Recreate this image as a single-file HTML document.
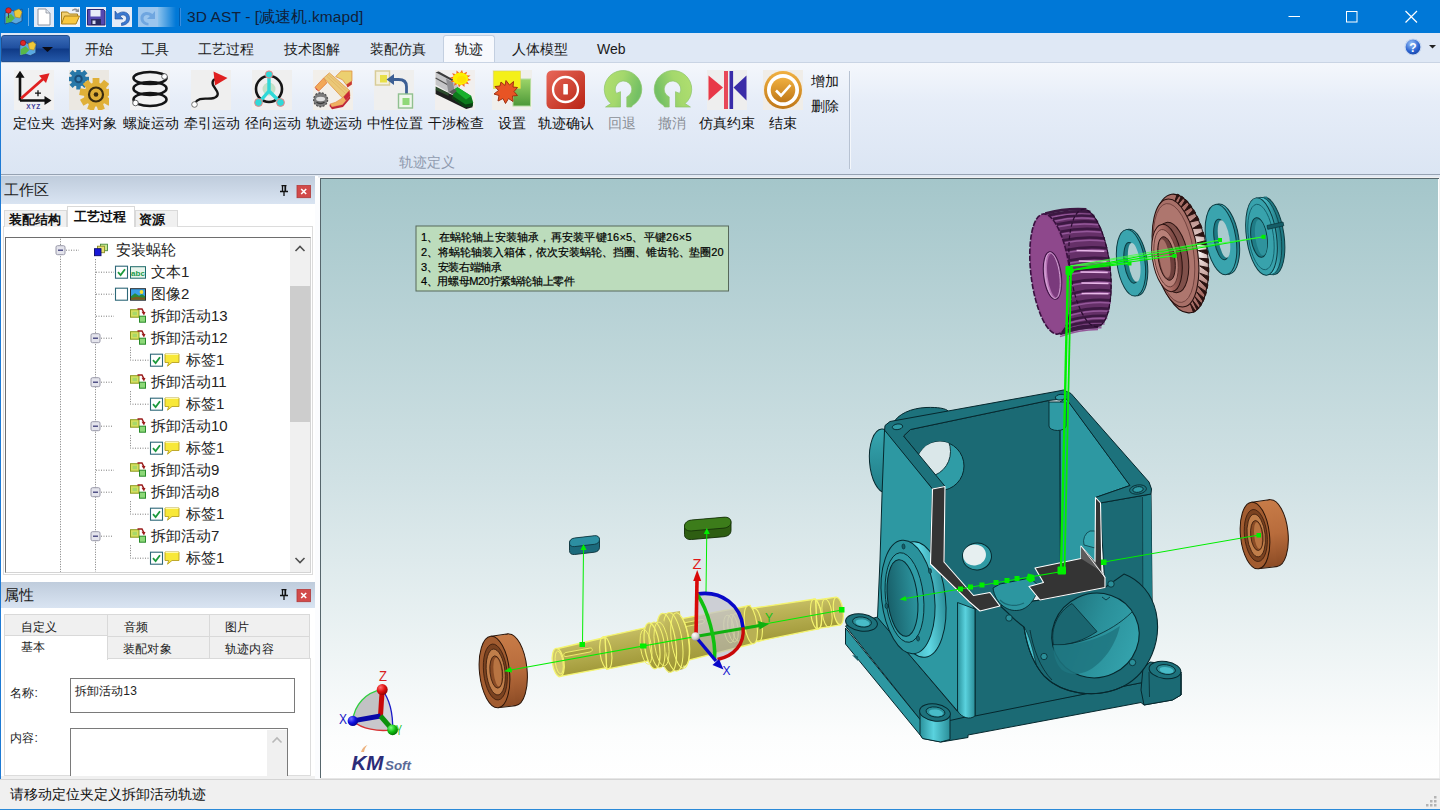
<!DOCTYPE html>
<html lang="zh">
<head>
<meta charset="utf-8">
<title>3D AST</title>
<style>
*{box-sizing:border-box;margin:0;padding:0}
html,body{width:1440px;height:810px;overflow:hidden;background:#f0f0f0}
body{position:relative;font-family:"Liberation Sans",sans-serif;font-size:14px;color:#111;-webkit-font-smoothing:antialiased}
.abs{position:absolute}
/* title bar */
#title{left:0;top:0;width:1440px;height:33px;background:#0078d7}
#title .ttl{left:187px;top:7px;font-size:15.5px;color:#10203a;white-space:nowrap;letter-spacing:0.1px}
/* menu bar */
#menu{left:0;top:33px;width:1440px;height:30px;background:#dfe8f5}
#menu .tab{position:absolute;top:8px;font-size:14px;color:#1a1a1a;white-space:nowrap}
#appbtn{left:1px;top:35px;width:69px;height:27px;border-radius:3px 3px 0 0;background:linear-gradient(#3b6cb8 0%,#1f4f9f 48%,#0f3a86 52%,#2458a8 100%);border:1px solid #24508f}
#acttab{left:443px;top:35px;width:52px;height:29px;background:#f7f9fd;border:1px solid #c3cfe0;border-bottom:none;border-radius:3px 3px 0 0}
/* ribbon */
#ribbon{left:0;top:62px;width:1440px;height:112px;background:linear-gradient(#f4f7fc 0%,#e6edf8 35%,#dbe5f3 100%);border-top:1px solid #c9d4e4}
.rb{position:absolute;top:52px;font-size:14px;color:#111;white-space:nowrap;transform:translateX(-50%)}
.rb.dis{color:#8a8f96}
.ico{position:absolute;top:7px;width:40px;height:40px}
/* left panel */
#left{left:0;top:176px;width:318px;height:603px;background:#fff}
.phead{position:absolute;left:1px;width:313.700px;height:26px;background:linear-gradient(#bfccdc,#d9e4f2);font-size:14.5px;color:#1a1a1a}
.phead span{position:absolute;left:3px;top:5px}
.row{position:absolute;left:0;height:22px;font-size:15px;color:#222;white-space:nowrap;line-height:22px}
/* status */
#status{left:0;top:779px;width:1440px;height:31px;background:#f0f0f0;border-top:1px solid #d4d4d4;font-size:14px;color:#111}
</style>
</head>
<body>
<div id="title" class="abs">
<svg class="abs" style="left:0;top:0" width="190" height="33" viewBox="0 0 190 33">
<defs><linearGradient id="fade" x1="0" x2="1"><stop offset="0" stop-color="#fff" stop-opacity=".55"/><stop offset="1" stop-color="#fff" stop-opacity="0"/></linearGradient></defs>
<!-- app icon -->
<g id="appico"><path d="M5 13 L11 10 L16 12 L22 9 L22 21 L16 24 L11 22 L5 24Z" fill="#5aa8e0" stroke="#1c4a80" stroke-width=".8"/>
<path d="M6 17l5-3 4 4-4 4-5 1z" fill="#58b848"/><path d="M14 11l5-2 3 3-2 6-5-1z" fill="#f0c838" stroke="#a07818" stroke-width=".5"/>
<circle cx="8.5" cy="10.5" r="2.8" fill="#e02828" stroke="#801010" stroke-width=".6"/><path d="M8.5 13v5" stroke="#444" stroke-width="1"/></g>
<path d="M28.5 8v18" stroke="#6aaee8" stroke-width="1"/>
<!-- new -->
<rect x="34" y="7" width="20" height="20" fill="#dfeaf8"/><path d="M38 9h8l4 4v12H38z" fill="#fff" stroke="#8a93a0" stroke-width="1"/><path d="M46 9v4h4" fill="#e4e8ee" stroke="#8a93a0" stroke-width=".8"/>
<!-- open -->
<rect x="60" y="7" width="20" height="20" fill="#eef3fa"/><path d="M61.500 24V12h6l2 2h8v3" fill="#f2d070" stroke="#a8801c" stroke-width="1"/><path d="M61.500 24l3-8h15l-3.500 8z" fill="#f8c840" stroke="#a8801c" stroke-width="1"/><path d="M72 10c2-2 5-2 6 0l1-2v4h-4l1.500-1c-1-1-2.500-1-4.500 0z" fill="#8a8f98"/>
<!-- save -->
<rect x="86" y="7" width="20" height="20" fill="#e6ecf6"/><path d="M87.500 9.500h16l1.500 1.500v14h-17.500z" fill="#5448b0" stroke="#2a2470" stroke-width="1"/><rect x="90.500" y="10" width="10" height="6.500" fill="#e8ecf8"/><rect x="91" y="19" width="10" height="6" fill="#2a2a60"/><rect x="92.500" y="20.500" width="3" height="3.500" fill="#d8dcf0"/>
<!-- undo -->
<rect x="112" y="7" width="20" height="20" fill="#e4ecf8"/><path d="M115 11v8h8l-3-3c3-2 6.500-1 6.500 2.500 0 2.500-2 4-5 4.500v2.500c5-.5 8.500-3.500 8-8-.5-5.500-7-7.500-12-3.500z" fill="#3a78d0" stroke="#1c4c98" stroke-width=".6"/>
<!-- redo (disabled) -->
<rect x="138" y="7" width="20" height="20" fill="#9cc6ee"/><path d="M155 11v8h-8l3-3c-3-2-6.500-1-6.500 2.500 0 2.500 2 4 5 4.500v2.500c-5-.5-8.500-3.500-8-8 .5-5.500 7-7.500 12-3.500z" fill="#6fa6e0"/>
<rect x="158" y="7" width="18" height="20" fill="url(#fade)"/>
<path d="M180.500 8v18" stroke="#3a8ee0" stroke-width="1"/><path d="M179.500 8v18" stroke="#005cb0" stroke-width="1"/>
</svg>
<div class="abs ttl">3D AST - [减速机.kmapd]</div>
<svg class="abs" style="left:1280px;top:0" width="160" height="33" viewBox="0 0 160 33"><g stroke="#fff" stroke-width="1" fill="none">
<path d="M8.500 16.500h11.500"/><rect x="66.500" y="11.500" width="10.500" height="10.500"/><path d="M125.500 11l11.500 11.500M137 11l-11.500 11.500" stroke-width="1.200"/></g></svg>
</div>

<div id="menu" class="abs">
<span class="tab" style="left:85px">开始</span><span class="tab" style="left:141px">工具</span><span class="tab" style="left:198px">工艺过程</span><span class="tab" style="left:284px">技术图解</span><span class="tab" style="left:370px">装配仿真</span><span class="tab" style="left:512px">人体模型</span><span class="tab" style="left:597px">Web</span>
</div>
<div id="appbtn" class="abs"><svg class="abs" style="left:16px;top:3px" width="40" height="20" viewBox="0 0 40 20">
<g transform="translate(-3,-6) scale(.95)"><path d="M5 13 L11 10 L16 12 L22 9 L22 21 L16 24 L11 22 L5 24Z" fill="#5aa8e0" stroke="#1c3a70" stroke-width=".8"/><path d="M6 17l5-3 4 4-4 4-5 1z" fill="#58b848"/><path d="M14 11l5-2 3 3-2 6-5-1z" fill="#f0c838" stroke="#a07818" stroke-width=".5"/><circle cx="8.500" cy="10.500" r="2.800" fill="#e02828" stroke="#801010" stroke-width=".6"/></g>
<path d="M24 8h11l-5.500 5z" fill="#0a0a14"/></svg></div>
<div id="acttab" class="abs"><span class="abs" style="left:11px;top:5px;font-size:14px;color:#1a1a1a;white-space:nowrap">轨迹</span></div>
<svg class="abs" style="left:1400px;top:36px" width="40" height="22" viewBox="0 0 40 22"><defs><radialGradient id="hg" cx=".4" cy=".3" r=".8"><stop offset="0" stop-color="#9cc4f8"/><stop offset=".6" stop-color="#2a62d0"/><stop offset="1" stop-color="#123c98"/></radialGradient></defs>
<circle cx="13" cy="11" r="8" fill="url(#hg)" stroke="#c8d8f0" stroke-width="1.200"/><text x="13" y="15.500" font-family="Liberation Sans" font-weight="bold" font-size="12" fill="#fff" text-anchor="middle">?</text><path d="M29 9h7l-3.500 3.500z" fill="#222"/></svg>

<div id="ribbon" class="abs">
<svg width="0" height="0" style="position:absolute"><defs><linearGradient id="gRed" x1="0" y1="0" x2="1" y2="1"><stop offset="0" stop-color="#e8685a"/><stop offset="1" stop-color="#b82414"/></linearGradient><linearGradient id="gGrn" x1="0" y1="0" x2="0" y2="1"><stop offset="0" stop-color="#a8dc70"/><stop offset="1" stop-color="#74b85c"/></linearGradient><linearGradient id="gGrn2" x1="0" y1="0" x2="0" y2="1"><stop offset="0" stop-color="#9cd468"/><stop offset="1" stop-color="#4c9838"/></linearGradient><linearGradient id="gGold" x1="0" y1="0" x2="0" y2="1"><stop offset="0" stop-color="#f0b040"/><stop offset="1" stop-color="#c07818"/></linearGradient><linearGradient id="gOm" x1="0" y1="0" x2="1" y2="0.3"><stop offset="0" stop-color="#b2e070"/><stop offset=".5" stop-color="#a4d86c"/><stop offset="1" stop-color="#74c064"/></linearGradient></defs></svg>
<svg class="ico" style="left:14px" viewBox="0 0 40 40"><rect width="40" height="40" fill="#f1f1f1"/><path d="M6 30.500V4M6 30.500H33" stroke="#111" stroke-width="2.600" fill="none"/><path d="M6 .8l4.600 7H1.400zM37.500 30.500l-7 4.600v-9.200z" fill="#111"/>
<path d="M7 28.500L29 9" stroke="#e02020" stroke-width="2.800"/><path d="M35.500 3.200l-3.500 9.800-7-7.600z" fill="#e02020"/>
<path d="M21 23.200h6M24 20.200v6" stroke="#111" stroke-width="1.300"/>
<text x="19.500" y="39" font-family="Liberation Sans" font-weight="bold" font-size="6.500" fill="#3a3a98" text-anchor="middle" letter-spacing=".6">XYZ</text></svg>
<span class="rb" style="left:34px">定位夹</span>
<svg class="ico" style="left:69px" viewBox="0 0 40 40"><rect width="40" height="40" fill="#ebe8e2"/><g transform="translate(9.500,9)"><rect x="-2.200" y="-10.500" width="4.400" height="5" fill="#2878a8" transform="rotate(0)"/><rect x="-2.200" y="-10.500" width="4.400" height="5" fill="#2878a8" transform="rotate(45)"/><rect x="-2.200" y="-10.500" width="4.400" height="5" fill="#2878a8" transform="rotate(90)"/><rect x="-2.200" y="-10.500" width="4.400" height="5" fill="#2878a8" transform="rotate(135)"/><rect x="-2.200" y="-10.500" width="4.400" height="5" fill="#2878a8" transform="rotate(180)"/><rect x="-2.200" y="-10.500" width="4.400" height="5" fill="#2878a8" transform="rotate(225)"/><rect x="-2.200" y="-10.500" width="4.400" height="5" fill="#2878a8" transform="rotate(270)"/><rect x="-2.200" y="-10.500" width="4.400" height="5" fill="#2878a8" transform="rotate(315)"/><circle r="7.500" fill="#2878a8"/><circle r="4.200" fill="#1c4e78"/><circle r="2.200" fill="#3a8cc0"/></g>
<g transform="translate(27,24.500)"><rect x="-3.400" y="-16.500" width="6.800" height="6" fill="#e0b038" transform="rotate(0)"/><rect x="-3.400" y="-16.500" width="6.800" height="6" fill="#e0b038" transform="rotate(40)"/><rect x="-3.400" y="-16.500" width="6.800" height="6" fill="#e0b038" transform="rotate(80)"/><rect x="-3.400" y="-16.500" width="6.800" height="6" fill="#e0b038" transform="rotate(120)"/><rect x="-3.400" y="-16.500" width="6.800" height="6" fill="#e0b038" transform="rotate(160)"/><rect x="-3.400" y="-16.500" width="6.800" height="6" fill="#e0b038" transform="rotate(200)"/><rect x="-3.400" y="-16.500" width="6.800" height="6" fill="#e0b038" transform="rotate(240)"/><rect x="-3.400" y="-16.500" width="6.800" height="6" fill="#e0b038" transform="rotate(280)"/><rect x="-3.400" y="-16.500" width="6.800" height="6" fill="#e0b038" transform="rotate(320)"/><circle r="12" fill="#e0b038"/><circle r="7" fill="none" stroke="#3a2c10" stroke-width="2.200"/><circle r="2.300" fill="#3a2c10"/></g></svg>
<span class="rb" style="left:89px">选择对象</span>
<svg class="ico" style="left:130px" viewBox="0 0 40 40"><rect width="40" height="40" fill="#f2f2f2"/><g fill="none" stroke="#151515" stroke-width="2.600"><ellipse cx="20" cy="8" rx="16.500" ry="6"/><ellipse cx="20" cy="18.500" rx="16.500" ry="6.500"/><ellipse cx="20" cy="29.500" rx="16.500" ry="6.500"/></g>
<circle cx="34.500" cy="6.500" r="2.800" fill="#fff" stroke="#555" stroke-width=".9"/><circle cx="5.500" cy="33" r="2.800" fill="#fff" stroke="#555" stroke-width=".9"/></svg>
<span class="rb" style="left:150.5px">螺旋运动</span>
<svg class="ico" style="left:191px" viewBox="0 0 40 40"><rect width="40" height="40" fill="#efefef"/><path d="M4 33c4-7 12-3 19-5 8-3 1-9-1-13-1-3 0-5 2-6" fill="none" stroke="#151515" stroke-width="2.400"/><path d="M22.500 1.500l14 6.500-12.500 7.500z" fill="#e02020"/><circle cx="3.500" cy="34.500" r="2.800" fill="#fff" stroke="#666" stroke-width=".9"/></svg>
<span class="rb" style="left:211.5px">牵引运动</span>
<svg class="ico" style="left:252px" viewBox="0 0 40 40"><rect width="40" height="40" fill="#efefef"/><circle cx="17" cy="19" r="6.500" fill="#c4e0c8"/><circle cx="17" cy="19" r="13" fill="none" stroke="#151515" stroke-width="2.600"/>
<path d="M17 4v17M17 21L7 32.500M17 21l11.500 11.500" stroke="#30d8d8" stroke-width="3.400" fill="none" stroke-linecap="round"/>
<g fill="#30d8d8" stroke="#f08080" stroke-width="1"><circle cx="17" cy="4.500" r="3.600"/><circle cx="6.500" cy="32.500" r="3.900"/><circle cx="28.500" cy="32.500" r="3.900"/></g></svg>
<span class="rb" style="left:272.5px">径向运动</span>
<svg class="ico" style="left:313px" viewBox="0 0 40 40"><rect width="40" height="40" fill="#f2efea"/>
<path d="M22.600 6.600L28.250 1H38.900V11L33.250 14.750 29.500 9.750Z" fill="#ecd070" stroke="#e09040" stroke-width=".8"/>
<path d="M33.250 14.750L38.900 11V14.500L34.500 17.500Z" fill="#c83a30"/>
<path d="M2 17.250L10.750 7.900 13.900 12.900 5.750 21Z" fill="#f2a858" stroke="#e07838" stroke-width=".8"/>
<path d="M2 17.250L5.750 21 7.500 22.500 3 19.500Z" fill="#d03030"/>
<path d="M10.750 7.900L16.400 2.900 36.400 20.400 29.500 27.900Z" fill="#ebc878" stroke="#e09848" stroke-width=".8"/>
<path d="M13.500 6L32.500 23.500M15.200 4.500L34.500 21.800" stroke="#e0b060" stroke-width=".7" fill="none"/>
<path d="M17 34.100L22.600 32.250 29.500 27.900 36.400 20.400 37 26 29.500 34.750 18.900 37Z" fill="#f0b060" stroke="#e08840" stroke-width=".6"/>
<path d="M17 34.100L18.900 37 29.500 34.750 37 26 37.200 28.500 30 37 19 39.300 16.500 36Z" fill="#c02838"/>
<path d="M30.500 27L36.400 20.400 37 26 33 30.500Z" fill="#c82838"/>
<circle cx="7.600" cy="29.750" r="7" fill="#7c7c7c" stroke="#505050" stroke-width="1.300" stroke-dasharray="2 1.400"/><ellipse cx="7.600" cy="29" rx="4.500" ry="2.200" fill="#e0e0e0"/><path d="M3.500 32c2 2 6 2 8 0" stroke="#3c3c3c" stroke-width="1.400" fill="none"/>
</svg>
<span class="rb" style="left:333.5px">轨迹运动</span>
<svg class="ico" style="left:374px" viewBox="0 0 40 40"><rect width="40" height="40" fill="#efefee"/><rect x="1.500" y="1" width="14" height="14" fill="#f4f0dc" stroke="#d8cc98" stroke-width="1.400"/><rect x="6" y="5" width="7" height="7.500" fill="#e8e048"/>
<path d="M32.500 24V16.500c0-5-3-7-8-7H18" fill="none" stroke="#3c5f94" stroke-width="2.800"/><path d="M12.500 9.500l7.500-5.500v11z" fill="#3c5f94"/>
<rect x="24.500" y="24" width="14" height="14" fill="#eef6ea" stroke="#90c090" stroke-width="1.400"/><rect x="28.500" y="28" width="7" height="7" fill="#90d878"/></svg>
<span class="rb" style="left:394.5px">中性位置</span>
<svg class="ico" style="left:435px" viewBox="0 0 40 40"><rect width="40" height="40" fill="#f1efee"/>
<path d="M.6 2.250L3.750 1.600 18.750 9.750 23.750 17.250 13.750 22.250 .6 14.750Z" fill="#c6c6c8"/>
<path d="M.6 2.250L3.750 1.600 18.750 9.750 17 11Z" fill="#3c3c3c"/><path d="M.6 8l17 9.500" stroke="#505050" stroke-width="1.200"/><path d="M11 8.500l7 4 1.500 8-6 2.500z" fill="#8e8e92"/>
<path d="M.6 19.750L2.500 18.500 37.500 33.500V37.250L31.250 39 .6 24Z" fill="#1e1e1e"/>
<path d="M.6 16.500l13 6.500v3L.6 20z" fill="#2c4a2c"/>
<path d="M18.750 19.750L22.500 17.250 36.250 26 38.100 32.250 37.500 36 30 37.250 17.500 28.500Z" fill="#0e7a1c"/>
<path d="M18.750 19.750L22.500 17.250 36.250 26 31 29.500Z" fill="#18b02c"/>
<path d="M17.500 28.500L30 37.250 37.500 36 38 33 30.500 34.500 17.800 26Z" fill="#0a4012"/>
<path d="M14 22l5-3 3 2-4.500 3.500z" fill="#585858"/>
<path d="M27.0 -0.1L28.2 3.6L32.1 1.7L30.9 5.3L35.5 5.4L32.2 8.0L36.2 9.9L31.8 10.9L34.0 14.2L29.6 13.2L29.5 16.9L26.3 14.2L24.0 17.5L22.8 13.8L18.9 15.7L20.1 12.1L15.5 12.0L18.8 9.4L14.8 7.5L19.2 6.5L17.0 3.2L21.4 4.2L21.5 0.5L24.7 3.2Z" fill="#f46a20"/><ellipse cx="25.500" cy="8.700" rx="7.800" ry="6.200" fill="#fcf000"/><ellipse cx="26.500" cy="9.500" rx="4.500" ry="3.500" fill="#ffd800" opacity=".7"/>
</svg>
<span class="rb" style="left:455.5px">干涉检查</span>
<svg class="ico" style="left:492px" viewBox="0 0 40 40"><rect width="40" height="40" fill="#f0efec"/><rect x="21" y="9" width="17.500" height="27" fill="url(#gGrn2)" stroke="#b4dca0" stroke-width="1"/><rect x="1.500" y="1" width="27" height="17.500" fill="#f4f018" stroke="#d8d060" stroke-width=".6"/>
<path d="M9 12l4 3.500 1-5 3.500 4.500 4-3.500-.5 5.500 4.500.5-3.500 4 3.500 4-5 .5.500 5.500-4.500-3-3 5-2.500-5-5 2.500 1-5.500-5-1.500 4.500-3.500-3.500-4 5-.5z" fill="#e85424" stroke="#a03010" stroke-width="1"/></svg>
<span class="rb" style="left:511.5px">设置</span>
<svg class="ico" style="left:546px" viewBox="0 0 40 40"><rect x=".5" y=".5" width="38.500" height="38.500" rx="5.500" fill="url(#gRed)"/><circle cx="19.500" cy="19.500" r="12.500" fill="none" stroke="#fff" stroke-width="2.300"/><rect x="17.300" y="14" width="4.600" height="10.500" rx=".6" fill="#fff"/></svg>
<span class="rb" style="left:566px">轨迹确认</span>
<svg class="ico" style="left:603px" viewBox="0 0 40 40"><path d="M17.500 37H2.600L7.950 33.600A18.750 18.750 0 1 1 29.400 35.500L28.500 37H23.800V26.900A8.300 8.300 0 1 0 13.300 23.400L17.500 21.700Z" fill="url(#gOm)" stroke="#8cc46c" stroke-width=".7"/></svg>
<span class="rb dis" style="left:622px">回退</span>
<svg class="ico" style="left:653px" viewBox="0 0 40 40"><g transform="translate(40,0) scale(-1,1)"><path d="M17.500 37H2.600L7.950 33.600A18.750 18.750 0 1 1 29.400 35.500L28.500 37H23.800V26.900A8.300 8.300 0 1 0 13.300 23.400L17.500 21.700Z" fill="url(#gOm)" stroke="#8cc46c" stroke-width=".7"/></g></svg>
<span class="rb dis" style="left:672px">撤消</span>
<svg class="ico" style="left:707px" viewBox="0 0 40 40"><rect width="40" height="40" fill="#eeeeee"/><path d="M1.500 5.500L16 17.500 1.500 30.500z" fill="#e83848"/><rect x="17" y="1" width="4" height="38" fill="#e84858"/><rect x="22.500" y="1" width="3.600" height="38" fill="#3a2ca8"/><path d="M39.500 5.500L26.500 17.500l13 13z" fill="#3a2ca8"/></svg>
<span class="rb" style="left:727px">仿真约束</span>
<svg class="ico" style="left:763px" viewBox="0 0 40 40"><rect width="40" height="40" fill="#f0ede8"/><circle cx="20" cy="20" r="19" fill="url(#gGold)"/><circle cx="20" cy="20" r="16" fill="#fff"/><circle cx="20" cy="20" r="12.300" fill="url(#gGold)"/><path d="M13 20.500l5 5L27.500 15" fill="none" stroke="#fff" stroke-width="2.600"/></svg>
<span class="rb" style="left:783px">结束</span>
<span class="abs" style="left:811px;top:10px;font-size:14px;white-space:nowrap">增加</span><span class="abs" style="left:811px;top:35px;font-size:14px;white-space:nowrap">删除</span>
<span class="abs" style="left:399px;top:91px;font-size:13.500px;color:#8f9aae;white-space:nowrap">轨迹定义</span>
<div class="abs" style="left:849px;top:8px;width:1px;height:98px;background:#b7c2d2"></div><div class="abs" style="left:850px;top:8px;width:1px;height:98px;background:#f4f7fb"></div>
</div>
<div class="abs" style="left:0;top:174px;width:1440px;height:1.200px;background:#96a2b2"></div><div class="abs" style="left:0;top:175.200px;width:1440px;height:2.300px;background:#e2e9f3"></div>

<div id="left" class="abs">
<svg width="0" height="0" style="position:absolute"><defs><g id="pin"><path d="M2.500 .5h5M3.500 .5v5.500M6.500 .5v5.500M1 6.500h8M5 6.500V11" stroke="#111" stroke-width="1.300" fill="none"/><path d="M6.200 1v5" stroke="#111" stroke-width="1.400"/></g><g id="xbtn"><rect width="13.500" height="12.500" fill="#d24a4a" stroke="#b03838" stroke-width=".8"/><path d="M4.200 3.800l5 5M9.200 3.800l-5 5" stroke="#fff" stroke-width="1.600"/></g><g id="minus"><rect x=".5" y=".5" width="9" height="9" rx="1.500" fill="#e4e4ec" stroke="#9898a8"/><path d="M2.500 5h5" stroke="#3a3a78" stroke-width="1.300"/></g><g id="chk"><rect x=".5" y=".5" width="12" height="12" fill="#fff" stroke="#2e6878" stroke-width="1.100"/><path d="M3 6.500l2.600 2.800L10 3.500" fill="none" stroke="#1c9a3c" stroke-width="1.800"/></g><g id="unchk"><rect x=".5" y=".5" width="12" height="12" fill="#fff" stroke="#2e6878" stroke-width="1.100"/></g><g id="act"><rect x=".5" y="1.500" width="8.500" height="7.500" fill="#d8e060" stroke="#8a9a20" stroke-width="1"/><rect x="2.500" y="3.500" width="4.500" height="3.500" fill="#a8d868"/><path d="M7.500 .8h4.500l2 4" fill="none" stroke="#9a1c1c" stroke-width="1.500"/><path d="M11.500 3.500l4 .2-1.500 3.500z" fill="#9a1c1c"/><rect x="9.500" y="8" width="6" height="6" fill="#8cd878" stroke="#2a8a2a" stroke-width="1"/></g><g id="bub"><path d="M1 .8h14v8.500H8L3.500 13l1.200-3.700H1z" fill="#f8e838" stroke="#b8a020" stroke-width=".9"/><path d="M1.500 1.300h13" stroke="#fdf8a8" stroke-width="1"/></g><g id="root"><rect x="6.500" y=".5" width="7" height="6.500" fill="#c8e890" stroke="#4a8a3a" stroke-width=".9"/><rect x="3.500" y="2.500" width="7" height="6.500" fill="#e8e070" stroke="#8a8a28" stroke-width=".9"/><rect x=".5" y="5" width="6.500" height="7" fill="#1818d8" stroke="#0a0a68" stroke-width=".9"/></g><g id="abc"><rect x=".5" y=".5" width="15" height="11.500" fill="#e8f4ec" stroke="#1e6a6a" stroke-width="1"/><text x="8" y="9.500" font-family="Liberation Sans" font-size="8" font-weight="bold" fill="#1a9a4a" text-anchor="middle">abc</text></g><g id="img"><rect x=".5" y=".5" width="15" height="11.500" fill="#3aa0e8" stroke="#2a2a2a" stroke-width="1"/><path d="M1 8l4-3 4 2.500 3-1.500 3 2v3.500H1z" fill="#2a8a3a"/><path d="M1 10l5-1.500 9 1V11.500H1z" fill="#7a5a20"/><circle cx="11.500" cy="3.800" r="1.900" fill="#f8e030"/></g></defs></svg>
<div class="phead" style="top:0px;height:27.500px"><span>工作区</span></div>
<svg class="abs" style="left:279px;top:8.5px" width="34" height="14"><use href="#pin"/><use href="#xbtn" x="18" y=".2"/></svg>
<div class="abs" style="left:3px;top:50px;width:310px;height:349px;border:1px solid #dcdcdc;background:#fff"></div>
<div class="abs" style="left:4px;top:33.5px;width:63px;height:17px;background:#f0f0f0;border:1px solid #d9d9d9;border-bottom:none"><span class="abs" style="left:3.500px;top:.5px;font-size:13px;font-weight:bold;color:#111;white-space:nowrap;">装配结构</span></div>
<div class="abs" style="left:135px;top:33.5px;width:43px;height:17px;background:#f0f0f0;border:1px solid #d9d9d9;border-bottom:none"><span class="abs" style="left:2.500px;top:.5px;font-size:13px;font-weight:bold;color:#111;white-space:nowrap;">资源</span></div>
<div class="abs" style="left:66.500px;top:29.5px;width:68.500px;height:21.500px;background:#fff;border:1px solid #d9d9d9;border-bottom:none"><span class="abs" style="left:6.500px;top:1.500px;font-size:13px;font-weight:bold;color:#111;white-space:nowrap;">工艺过程</span></div>
<div class="abs" style="left:4.500px;top:60.5px;width:306.500px;height:336.500px;border:1.500px solid #6e6e6e;border-right-color:#d4d4d4;border-bottom-color:#d4d4d4;background:#fff"></div>
<div class="abs" style="left:290px;top:62px;width:19.500px;height:334px;background:#f0f0f0"></div>
<div class="abs" style="left:290px;top:110px;width:19.500px;height:136px;background:#cdcdcd"></div>
<svg class="abs" style="left:290px;top:62px" width="20" height="334"><path d="M5.500 13l4.500-4.500 4.500 4.500M5.500 320l4.500 4.500 4.500-4.500" fill="none" stroke="#505050" stroke-width="1.600"/></svg>
<svg class="abs" style="left:0;top:62px" width="290" height="334" viewBox="0 237.200 290 334"><g stroke="#7a7a7a" stroke-width="1" stroke-dasharray="1 1.500" fill="none"><path d="M60.500 238V572"/><path d="M66 249.4H79"/><path d="M95.500 258.4V572"/><path d="M96 271.4H114"/><path d="M96 293.4H114"/><path d="M96 315.4H114"/><path d="M96 469.4H114"/><path d="M101 337.4H113"/><path d="M130.500 346.4V359.4H149"/><path d="M101 381.4H113"/><path d="M130.500 390.4V403.4H149"/><path d="M101 425.4H113"/><path d="M130.500 434.4V447.4H149"/><path d="M101 491.4H113"/><path d="M130.500 500.4V513.4H149"/><path d="M101 535.4H113"/><path d="M130.500 544.4V557.4H149"/></g><use href="#minus" x="55.500" y="244.4"/><use href="#minus" x="90.500" y="332.4"/><use href="#minus" x="90.500" y="376.4"/><use href="#minus" x="90.500" y="420.4"/><use href="#minus" x="90.500" y="486.4"/><use href="#minus" x="90.500" y="530.4"/><use href="#root" x="94" y="242.9"/><use href="#chk" x="115" y="264.9"/><use href="#abc" x="130" y="265.4"/><use href="#unchk" x="115" y="286.9"/><use href="#img" x="130" y="287.4"/><use href="#act" x="130" y="307.4"/><use href="#act" x="130" y="329.4"/><use href="#act" x="130" y="373.4"/><use href="#act" x="130" y="417.4"/><use href="#act" x="130" y="461.4"/><use href="#act" x="130" y="483.4"/><use href="#act" x="130" y="527.4"/><use href="#chk" x="150" y="352.9"/><use href="#bub" x="164" y="352.4"/><use href="#chk" x="150" y="396.9"/><use href="#bub" x="164" y="396.4"/><use href="#chk" x="150" y="440.9"/><use href="#bub" x="164" y="440.4"/><use href="#chk" x="150" y="506.9"/><use href="#bub" x="164" y="506.4"/><use href="#chk" x="150" y="550.9"/><use href="#bub" x="164" y="550.4"/></svg>
<div class="row" style="left:116px;top:62.70px">安装蜗轮</div><div class="row" style="left:151px;top:84.70px">文本1</div><div class="row" style="left:151px;top:106.70px">图像2</div><div class="row" style="left:151px;top:128.70px">拆卸活动13</div><div class="row" style="left:151px;top:150.70px">拆卸活动12</div><div class="row" style="left:186px;top:172.70px">标签1</div><div class="row" style="left:151px;top:194.70px">拆卸活动11</div><div class="row" style="left:186px;top:216.70px">标签1</div><div class="row" style="left:151px;top:238.70px">拆卸活动10</div><div class="row" style="left:186px;top:260.70px">标签1</div><div class="row" style="left:151px;top:282.70px">拆卸活动9</div><div class="row" style="left:151px;top:304.70px">拆卸活动8</div><div class="row" style="left:186px;top:326.70px">标签1</div><div class="row" style="left:151px;top:348.70px">拆卸活动7</div><div class="row" style="left:186px;top:370.70px">标签1</div>
<div class="phead" style="top:406px;height:25.500px"><span style="top:4px">属性</span></div>
<svg class="abs" style="left:279px;top:412.5px" width="34" height="14"><use href="#pin"/><use href="#xbtn" x="18" y=".2"/></svg>
<div class="abs" style="left:3.500px;top:482px;width:307px;height:117.500px;background:#fff;border:1px solid #dcdcdc"></div>
<div class="abs" style="left:3.5px;top:438px;width:104.5px;height:23px;background:#f0f0f0;border:1px solid #d9d9d9"><span class="abs" style="left:16.5px;top:4px;font-family:'Liberation Sans',sans-serif;font-size:12px;color:#222;white-space:nowrap;letter-spacing:.2px;">自定义</span></div>
<div class="abs" style="left:107px;top:438px;width:103px;height:23px;background:#f0f0f0;border:1px solid #d9d9d9"><span class="abs" style="left:15.5px;top:4px;font-family:'Liberation Sans',sans-serif;font-size:12px;color:#222;white-space:nowrap;letter-spacing:.2px;">音频</span></div>
<div class="abs" style="left:209px;top:438px;width:101px;height:23px;background:#f0f0f0;border:1px solid #d9d9d9"><span class="abs" style="left:15px;top:4px;font-family:'Liberation Sans',sans-serif;font-size:12px;color:#222;white-space:nowrap;letter-spacing:.2px;">图片</span></div>
<div class="abs" style="left:107px;top:460px;width:103px;height:23px;background:#f0f0f0;border:1px solid #d9d9d9"><span class="abs" style="left:15px;top:4px;font-family:'Liberation Sans',sans-serif;font-size:12px;color:#222;white-space:nowrap;letter-spacing:.2px;">装配对象</span></div>
<div class="abs" style="left:209px;top:460px;width:101px;height:23px;background:#f0f0f0;border:1px solid #d9d9d9"><span class="abs" style="left:15px;top:4px;font-family:'Liberation Sans',sans-serif;font-size:12px;color:#222;white-space:nowrap;letter-spacing:.2px;">轨迹内容</span></div>
<div class="abs" style="left:3.500px;top:458.5px;width:104.500px;height:25px;background:#fff;border:1px solid #d9d9d9;border-bottom:none"><span class="abs" style="left:16.500px;top:3.500px;font-family:'Liberation Sans',sans-serif;font-size:12px;color:#222;white-space:nowrap;letter-spacing:.2px;">基本</span></div>
<span class="abs" style="left:10px;top:508.5px;font-family:'Liberation Sans',sans-serif;font-size:12px;color:#222;white-space:nowrap;letter-spacing:.2px;">名称:</span><span class="abs" style="left:10px;top:554px;font-family:'Liberation Sans',sans-serif;font-size:12px;color:#222;white-space:nowrap;letter-spacing:.2px;">内容:</span>
<div class="abs" style="left:70px;top:502px;width:225px;height:34.500px;background:#fff;border:1px solid #7a7a7a"><span class="abs" style="left:3.500px;top:4px;font-family:'Liberation Sans',sans-serif;font-size:12px;color:#222;white-space:nowrap;letter-spacing:.2px;">拆卸活动13</span></div>
<div class="abs" style="left:70px;top:552px;width:218px;height:47.500px;background:#fff;border:1px solid #7a7a7a;border-bottom:none"><div class="abs" style="left:196px;top:1px;width:20px;height:46px;background:#f0f0f0"></div><svg class="abs" style="left:196px;top:1px" width="20" height="20"><path d="M5.500 12.500l4.500-4.500 4.500 4.500" fill="none" stroke="#b8b8b8" stroke-width="1.600"/></svg></div>
<div class="abs" style="left:0;top:599.5px;width:318px;height:4px;background:#f0f0f0"></div>
</div>
<div class="abs" style="left:0;top:33px;width:1px;height:777px;background:#1e7ad4"></div>
<div class="abs" style="left:314.700px;top:177.500px;width:5px;height:601.500px;background:#fbfcfe"></div>

<!--VP0--><div id="vp" class="abs" style="left:319.500px;top:177.500px;width:1119px;height:600px;border-top:1.500px solid #56666c;border-left:1.500px solid #56666c;overflow:hidden;background:#fff">
<svg class="abs" style="left:0;top:0" width="1117.500" height="598.500" viewBox="321 179 1117.500 598.500">
<defs>
<linearGradient id="bg" x1="0" y1="0" x2="0" y2="1"><stop offset="0" stop-color="#a4c6ca"/><stop offset=".5" stop-color="#d0e1e4"/><stop offset=".93" stop-color="#fcfdfd"/><stop offset="1" stop-color="#ffffff"/></linearGradient>
<linearGradient id="pHole" x1="0" x2="1"><stop offset="0" stop-color="#c88cc8"/><stop offset=".45" stop-color="#a45ca2"/><stop offset="1" stop-color="#5a2460"/></linearGradient>
<linearGradient id="brnHub" x1="0" x2="1"><stop offset="0" stop-color="#d8a49c"/><stop offset=".5" stop-color="#a86860"/><stop offset="1" stop-color="#6a3c38"/></linearGradient>
<linearGradient id="tealSide" x1="0" x2="1"><stop offset="0" stop-color="#2a98a4"/><stop offset=".5" stop-color="#58d0dc"/><stop offset="1" stop-color="#1c7680"/></linearGradient>
<radialGradient id="ballR" cx=".35" cy=".3" r=".8"><stop offset="0" stop-color="#ff7070"/><stop offset=".5" stop-color="#e01010"/><stop offset="1" stop-color="#800000"/></radialGradient>
<radialGradient id="ballB" cx=".35" cy=".3" r=".8"><stop offset="0" stop-color="#7070ff"/><stop offset=".5" stop-color="#1010e0"/><stop offset="1" stop-color="#000080"/></radialGradient>
<radialGradient id="ballG" cx=".35" cy=".3" r=".8"><stop offset="0" stop-color="#80ff80"/><stop offset=".5" stop-color="#10c010"/><stop offset="1" stop-color="#006000"/></radialGradient>
<radialGradient id="ballW" cx=".35" cy=".3" r=".8"><stop offset="0" stop-color="#ffffff"/><stop offset=".6" stop-color="#d0d0d0"/><stop offset="1" stop-color="#808080"/></radialGradient>
</defs>
<rect x="319" y="177" width="1121" height="602" fill="url(#bg)"/>
<rect x="416" y="226" width="312.500" height="65" fill="#bcdcbc" stroke="#56685a" stroke-width="1"/>
<text x="421" y="241" font-family="Liberation Sans,sans-serif" font-size="11" fill="#000" stroke="#000" stroke-width=".2" textLength="270.5" lengthAdjust="spacing">1、在蜗轮轴上安装轴承，再安装平键16×5、平键26×5</text>
<text x="421" y="255.7" font-family="Liberation Sans,sans-serif" font-size="11" fill="#000" stroke="#000" stroke-width=".2" textLength="302.5" lengthAdjust="spacing">2、将蜗轮轴装入箱体，依次安装蜗轮、挡圈、锥齿轮、垫圈20</text>
<text x="421" y="270.5" font-family="Liberation Sans,sans-serif" font-size="11" fill="#000" stroke="#000" stroke-width=".2" textLength="81" lengthAdjust="spacing">3、安装右端轴承</text>
<text x="421" y="285" font-family="Liberation Sans,sans-serif" font-size="11" fill="#000" stroke="#000" stroke-width=".2" textLength="154" lengthAdjust="spacing">4、用螺母M20拧紧蜗轮轴上零件</text>
<defs>
<linearGradient id="colG" x1="0" x2="1"><stop offset="0" stop-color="#2a929c"/><stop offset=".45" stop-color="#5ad2de"/><stop offset="1" stop-color="#2a8e98"/></linearGradient>
<linearGradient id="boreG" x1="0" y1="0" x2="1" y2="1"><stop offset="0" stop-color="#1a6670"/><stop offset=".5" stop-color="#2a909a"/><stop offset="1" stop-color="#38aab4"/></linearGradient>
<linearGradient id="lboreG" x1="0" x2="1"><stop offset="0" stop-color="#18606a"/><stop offset="1" stop-color="#2c949e"/></linearGradient>
<linearGradient id="flSide" x1="0" y1="0" x2="1" y2="0"><stop offset="0" stop-color="#2a929c"/><stop offset=".6" stop-color="#60d8e4"/><stop offset="1" stop-color="#2a8e98"/></linearGradient>
<linearGradient id="bossG" x1="0" y1="0" x2="0" y2="1"><stop offset="0" stop-color="#36a6b0"/><stop offset="1" stop-color="#1f7a84"/></linearGradient>
</defs>
<ellipse cx="884" cy="461" rx="14.5" ry="32" transform="rotate(-4 884 461)" fill="url(#bossG)" stroke="#06282e" stroke-width="1"/>
<path d="M893 424C897 414 912 408 926 407.500 938 407 946 408.500 948 411L905 425Z" fill="#1d727c" stroke="#06282e" stroke-width="1"/>
<path d="M845.5 626.0L877.5 617.0L957.0 711.0L975.0 716.0L975.0 722.0L941.0 723.0L922.5 722.5Z" fill="#1d727c" stroke="#06282e" stroke-width="1" stroke-linejoin="round" />
<path d="M845.5 628.0L922.5 722.5L941.0 722.5L941.0 742.0L923.0 738.5L845.5 644.0Z" fill="#2d98a2" stroke="#06282e" stroke-width="1" stroke-linejoin="round" />
<path d="M941.0 722.5L970.0 716.0L1142.5 682.5L1150.0 677.5L1172.5 683.0L1181.0 672.0L1181.0 695.0L1172.5 700.0L1144.0 705.0L1141.0 702.5L968.0 735.0L968.0 737.5L941.0 742.0Z" fill="#1b6a74" stroke="#06282e" stroke-width="1" stroke-linejoin="round" />
<path d="M975.0 609.0L1000.0 606.0L1040.0 600.0L1105.0 587.5L1100.0 503.0L1151.0 494.0L1152.5 642.0L1142.5 682.5L975.0 716.0Z" fill="#1b6a74" stroke="#06282e" stroke-width="1" stroke-linejoin="round" />
<path d="M1142.5 497.0L1151.0 494.5L1152.5 642.0L1146.0 668.0L1143.0 640.0Z" fill="#217d87" />
<path d="M1142.5 497.0L1143.0 640.0" fill="none" stroke="#0c3a42" stroke-width="0.8" stroke-linejoin="round"/>
<path d="M1143.0 668.0L1150.0 662.0L1166.0 664.0L1181.0 672.0L1181.0 695.0L1172.5 700.0L1144.0 705.0L1141.0 690.0Z" fill="#1b6a74" stroke="#06282e" stroke-width="1" stroke-linejoin="round" />
<ellipse cx="1165" cy="670" rx="16" ry="8.5" transform="rotate(8 1165 670)" fill="#1d727c" stroke="#06282e" stroke-width="1"/>
<ellipse cx="1166" cy="669.5" rx="9.5" ry="4.8" transform="rotate(8 1166 669.5)" fill="#2a8e98" stroke="#06282e" stroke-width="0.9"/>
<ellipse cx="1166.5" cy="670.3" rx="7" ry="3.2" transform="rotate(8 1166.5 670.3)" fill="#48bcc8"/>
<path d="M1149.0 672.0L1149.5 697.0" fill="none" stroke="#06282e" stroke-width="0.8" stroke-linejoin="round"/>
<path d="M1181.0 674.0L1181.0 695.0" fill="none" stroke="#06282e" stroke-width="1" stroke-linejoin="round"/>
<path d="M910.5 429.5L1048.5 400.5L1060.0 432.0L1060.5 566.0L1036.0 569.0L1044.0 583.0L1030.0 591.0L1000.0 606.0L975.0 609.0L944.0 562.0L945.0 487.0L903.5 436.0Z" fill="#1b6a74" stroke="#06282e" stroke-width="1" stroke-linejoin="round" />
<path d="M1060.0 402.0L1066.0 398.0L1130.0 485.5L1095.5 497.5L1097.0 560.0L1060.5 566.0Z" fill="#2d98a2" stroke="#06282e" stroke-width="1" stroke-linejoin="round" />
<path d="M1060.0 430.0L1060.5 566.0" fill="none" stroke="#0e4850" stroke-width="1" stroke-linejoin="round"/>
<path d="M1084 545a9 11 0 0 1 6-14l5 0v17z" fill="#36a6b0" stroke="#0c3a42" stroke-width=".8"/>
<clipPath id="bigHole"><ellipse cx="940" cy="466" rx="24" ry="24.500"/></clipPath>
<ellipse cx="940" cy="466" rx="24" ry="24.5" fill="#2f9ca6" stroke="#06282e" stroke-width="1"/>
<g clip-path="url(#bigHole)"><ellipse cx="925.500" cy="451.500" rx="25" ry="25.500" fill="#dae7e9" stroke="#06282e" stroke-width=".9"/></g>
<ellipse cx="977" cy="556.5" rx="14.5" ry="13.5" transform="rotate(-10 977 556.5)" fill="#2f9aa4" stroke="#06282e" stroke-width="1"/>
<ellipse cx="974.5" cy="555" rx="11.5" ry="10.5" transform="rotate(-10 974.5 555)" fill="#e6eff0"/>
<path d="M1049 402v24a8.500 4.500 0 0 0 17 0v-24z" fill="#2f9aa4" stroke="#06282e" stroke-width=".9"/>
<path d="M884.5 431.0L885.0 425.5L890.0 421.5L1056.0 391.5L1063.5 390.0L1071.0 393.5L1149.0 482.0L1151.5 489.0L1151.0 494.0L1100.0 503.0L1095.5 497.5L1130.0 485.5L1066.0 398.5L1048.5 400.5L910.5 429.5L903.5 436.0L945.0 486.3L932.5 489.0Z" fill="#1d727c" stroke="#06282e" stroke-width="1" stroke-linejoin="round" />
<ellipse cx="897.5" cy="426.8" rx="5.2" ry="2.8" transform="rotate(-8 897.5 426.8)" fill="#2e9aa4" stroke="#06282e" stroke-width="0.9"/>
<ellipse cx="1060.5" cy="397.2" rx="5.2" ry="2.8" transform="rotate(-8 1060.5 397.2)" fill="#2e9aa4" stroke="#06282e" stroke-width="0.9"/>
<ellipse cx="1138" cy="489.5" rx="5.2" ry="2.8" transform="rotate(-8 1138 489.5)" fill="#2e9aa4" stroke="#06282e" stroke-width="0.9"/>
<ellipse cx="1138" cy="489.5" rx="8.5" ry="4.6" transform="rotate(-8 1138 489.5)" fill="none" stroke="#06282e" stroke-width="0.8"/>
<path d="M884.5 430.0L932.5 489.0L930.0 564.0L969.5 602.5L975.0 609.0L957.5 711.0L877.5 617.5L880.0 560.0L882.0 495.0Z" fill="#2d98a2" stroke="#06282e" stroke-width="1" stroke-linejoin="round" />
<ellipse cx="919" cy="599.5" rx="26.5" ry="58" transform="rotate(-6 919 599.5)" fill="url(#flSide)" stroke="#06282e" stroke-width="1"/>
<ellipse cx="908" cy="597" rx="26.5" ry="57" transform="rotate(-6 908 597)" fill="#2a929c" stroke="#06282e" stroke-width="1"/>
<ellipse cx="904.5" cy="597.5" rx="19" ry="45" transform="rotate(-6 904.5 597.5)" fill="#2f9ca6" stroke="#06282e" stroke-width="0.9"/>
<ellipse cx="902.5" cy="598" rx="15" ry="38.5" transform="rotate(-6 902.5 598)" fill="url(#lboreG)" stroke="#06282e" stroke-width="1"/>
<ellipse cx="903.5" cy="546.5" rx="1.5" ry="2.6" transform="rotate(-6 903.5 546.5)" fill="#17616b" stroke="#06282e" stroke-width="0.6"/>
<ellipse cx="886.5" cy="606" rx="1.5" ry="2.6" transform="rotate(-6 886.5 606)" fill="#17616b" stroke="#06282e" stroke-width="0.6"/>
<ellipse cx="918" cy="638.5" rx="1.5" ry="2.6" transform="rotate(-6 918 638.5)" fill="#17616b" stroke="#06282e" stroke-width="0.6"/>
<ellipse cx="930" cy="571" rx="1.5" ry="2.6" transform="rotate(-6 930 571)" fill="#17616b" stroke="#06282e" stroke-width="0.6"/>
<path d="M957.500 602.500L975 609V716C970 720 962 718 957.500 711Z" fill="url(#colG)" stroke="#06282e" stroke-width=".9"/>
<ellipse cx="861.5" cy="622.5" rx="16" ry="8.5" transform="rotate(8 861.5 622.5)" fill="#1d727c" stroke="#06282e" stroke-width="1"/>
<ellipse cx="862" cy="622" rx="9.5" ry="5" transform="rotate(8 862 622)" fill="#2a8e98" stroke="#06282e" stroke-width="0.9"/>
<ellipse cx="862.5" cy="622.8" rx="7" ry="3.3" transform="rotate(8 862.5 622.8)" fill="#48bcc8"/>
<path d="M920 713a15 8.500 8 0 1 30 4v22.500l-9.500 2.500-18-3.500-2.500-4z" fill="url(#colG)" stroke="#06282e" stroke-width="1"/>
<ellipse cx="935" cy="712.5" rx="15.5" ry="8.5" transform="rotate(8 935 712.5)" fill="#1d727c" stroke="#06282e" stroke-width="1"/>
<ellipse cx="935.5" cy="712" rx="9.5" ry="5" transform="rotate(8 935.5 712)" fill="#2a8e98" stroke="#06282e" stroke-width="0.9"/>
<ellipse cx="936" cy="712.8" rx="7" ry="3.3" transform="rotate(8 936 712.8)" fill="#48bcc8"/>
<path d="M852.0 655.0L858.0 656.5L858.0 661.0Z" fill="#16606a" />
<path d="M1000 606C1008 612 1016 622 1024 627 1026 640 1030 660 1044 676 1062 694 1096 700 1124 686 1150 672 1162 640 1156 612 1152 594 1140 580 1124 574L1105 587.500 1040 600Z" fill="#1b6a74" stroke="#06282e" stroke-width="1.100"/>
<path d="M1024 627C1029 634 1033 650 1036 664 1030 654 1026 640 1024 627Z" fill="#48c0cc" stroke="#06282e" stroke-width=".7"/>
<path d="M1024 627C1026 640 1030 660 1044 676 1062 694 1096 700 1124 686" fill="none" stroke="#06282e" stroke-width="1"/>
<path d="M1030 630C1033 648 1040 668 1052 680" fill="none" stroke="#06282e" stroke-width=".8"/>
<ellipse cx="1095.5" cy="635.5" rx="44" ry="42" transform="rotate(-25 1095.5 635.5)" fill="url(#boreG)" stroke="#06282e" stroke-width="1.1"/>
<path d="M1072 603.500L1097 631.500C1085 640 1068 646 1053.500 645 1050 628 1058 612 1072 603.500Z" fill="#1a6670" stroke="#06282e" stroke-width=".8"/>
<path d="M1053.500 645C1075 646 1110 634 1132 612" fill="none" stroke="#06282e" stroke-width=".8"/>
<path d="M1053.500 645C1075 646 1100 640 1120 626 1112 660 1082 684 1062 670 1056 664 1053 655 1053.500 645Z" fill="#1f7680" opacity=".85"/>
<path d="M1102 597l4 3 4-3" fill="none" stroke="#06282e" stroke-width=".8"/>
<ellipse cx="1009" cy="618" rx="3.2" ry="3.2" fill="#2a8e98" stroke="#06282e" stroke-width="0.8"/>
<ellipse cx="1044" cy="656.5" rx="3.2" ry="3.2" fill="#2a8e98" stroke="#06282e" stroke-width="0.8"/>
<ellipse cx="1132.5" cy="662.5" rx="3.2" ry="3.2" fill="#2a8e98" stroke="#06282e" stroke-width="0.8"/>
<ellipse cx="1111" cy="584" rx="3.2" ry="3.2" fill="#2a8e98" stroke="#06282e" stroke-width="0.8"/>
<path d="M993 588C995 603 1008 614 1022 609.500 1031 606 1036 597 1039 586L1030 578 1000 584Z" fill="#2c96a0" stroke="#06282e" stroke-width=".9"/>
<path d="M1000 600C1006 606 1016 607 1024 603" fill="none" stroke="#1a6a74" stroke-width="1.200"/>
<path d="M932.500 489L945 486.500 944 562 973.500 595.500 990 592.500 1000 606 980 611 969.500 602 930.500 564Z" fill="#343434" stroke="#fff" stroke-width="1.100" stroke-linejoin="round"/>
<path d="M1035 568L1081 558.500 1081 546 1095 562 1095.500 497.500 1100.500 503 1102 572 1105 577.500 1105 587.500 1040 600 1029 586.500 1043.500 582.500Z" fill="#343434" stroke="#fff" stroke-width="1.100" stroke-linejoin="round"/>
<path d="M1081 546L1095 562 1105 577.500 1102 572 1081 558.500Z" fill="#5c5c5c"/>
<path d="M1081 546L1105 577.500" stroke="#fff" stroke-width=".9"/>
<defs>
<linearGradient id="shG" x1="0" y1="0" x2="0.18" y2="1"><stop offset="0" stop-color="#d0c870"/><stop offset=".35" stop-color="#bcb458"/><stop offset="1" stop-color="#a09838"/></linearGradient>
<linearGradient id="brG" x1="0" y1="0" x2="0" y2="1"><stop offset="0" stop-color="#c87c48"/><stop offset=".5" stop-color="#b86c3c"/><stop offset="1" stop-color="#8a4a24"/></linearGradient>
<linearGradient id="brF" x1="0" y1="0" x2="1" y2="0"><stop offset="0" stop-color="#8a4a26"/><stop offset="1" stop-color="#c07a48"/></linearGradient>
</defs>
<path d="M815.5 600.2L836.2 597.2L840.6 624.8L817 628.6Z" fill="url(#shG)" stroke="#f4f470" stroke-width="1.300" stroke-linejoin="round"/>
<ellipse cx="838.3" cy="611" rx="4.8" ry="13.8" transform="rotate(-8 838.3 611)" fill="#c4bc60" stroke="#f4f470" stroke-width="1.2"/>
<ellipse cx="827" cy="613" rx="4.8" ry="14.2" transform="rotate(-8 827 613)" fill="none" stroke="#f4f470" stroke-width="1"/>
<ellipse cx="816.5" cy="614.5" rx="5" ry="14.2" transform="rotate(-8 816.5 614.5)" fill="none" stroke="#f4f470" stroke-width="1"/>
<path d="M750.3 608.5L815.5 599L817 629.2L751.8 642.5Z" fill="url(#shG)" stroke="#f4f470" stroke-width="1.300" stroke-linejoin="round"/>
<ellipse cx="816" cy="614.2" rx="5.2" ry="15.2" transform="rotate(-8 816 614.2)" fill="none" stroke="#f4f470" stroke-width="1.1"/>
<ellipse cx="756.5" cy="625" rx="5.5" ry="16.8" transform="rotate(-8 756.5 625)" fill="none" stroke="#f4f470" stroke-width="1.1"/>
<path d="M680.7 618.8L750.3 605.5L751.5 644L682 661.8Z" fill="url(#shG)" stroke="#f4f470" stroke-width="1.300" stroke-linejoin="round"/>
<ellipse cx="750.8" cy="624.7" rx="6.2" ry="19.3" transform="rotate(-8 750.8 624.7)" fill="#b8b054" stroke="#f4f470" stroke-width="1.1"/>
<ellipse cx="729" cy="629" rx="5" ry="14" transform="rotate(-8 729 629)" fill="none" stroke="#f4f470" stroke-width="0.9"/>
<ellipse cx="733" cy="628.2" rx="5" ry="14" transform="rotate(-8 733 628.2)" fill="none" stroke="#f4f470" stroke-width="0.9"/>
<ellipse cx="737" cy="627.4" rx="5" ry="14" transform="rotate(-8 737 627.4)" fill="none" stroke="#f4f470" stroke-width="0.9"/>
<path d="M686 622.500c-3 .5-3 4.500 0 4l16-3c3-.5 3-4.500 0-4z" fill="#a8a040" stroke="#f4f470" stroke-width=".9"/>
<path d="M605 636.6L649.6 626.8L651 660.3L606.6 669.2Z" fill="url(#shG)" stroke="#f4f470" stroke-width="1.300" stroke-linejoin="round"/>
<path d="M557.7 648.5L605 637.5L606.6 667.7L559 676.6Z" fill="url(#shG)" stroke="#f4f470" stroke-width="1.300" stroke-linejoin="round"/>
<ellipse cx="558.2" cy="662.5" rx="5.8" ry="14.2" transform="rotate(-8 558.2 662.5)" fill="#cfc76c" stroke="#f4f470" stroke-width="1.3"/>
<ellipse cx="559.2" cy="662.5" rx="3.8" ry="11.5" transform="rotate(-8 559.2 662.5)" fill="none" stroke="#f4f470" stroke-width="0.9"/>
<ellipse cx="605.8" cy="652.8" rx="5.8" ry="16.4" transform="rotate(-8 605.8 652.8)" fill="none" stroke="#f4f470" stroke-width="1.1"/>
<path d="M566 652.500c-3 .5-3 4.500 0 4l24-4.500c3-.5 3-4.500 0-4z" fill="#a8a040" stroke="#f4f470" stroke-width=".9"/>
<ellipse cx="681" cy="640.5" rx="8" ry="26" transform="rotate(-8 681 640.5)" fill="url(#shG)" stroke="#f4f470" stroke-width="1.1"/>
<path d="M664 613.500L680 611 683.500 669 668 672.500Z" fill="url(#shG)"/>
<ellipse cx="666.5" cy="642.8" rx="9.2" ry="29.8" transform="rotate(-8 666.5 642.8)" fill="url(#shG)" stroke="#f4f470" stroke-width="1.2"/>
<ellipse cx="673" cy="641.8" rx="9.2" ry="29.6" transform="rotate(-8 673 641.8)" fill="none" stroke="#f4f470" stroke-width="1"/>
<ellipse cx="680" cy="640.6" rx="8.5" ry="28" transform="rotate(-8 680 640.6)" fill="none" stroke="#f4f470" stroke-width="1"/>
<path d="M650 623L664 620.500 667 666 653 669Z" fill="url(#shG)"/>
<ellipse cx="652" cy="645.8" rx="7.4" ry="23.2" transform="rotate(-8 652 645.8)" fill="url(#shG)" stroke="#f4f470" stroke-width="1.2"/>
<ellipse cx="657" cy="645" rx="7.4" ry="23.2" transform="rotate(-8 657 645)" fill="none" stroke="#f4f470" stroke-width="1"/>
<ellipse cx="661.5" cy="644" rx="7" ry="22" transform="rotate(-8 661.5 644)" fill="none" stroke="#f4f470" stroke-width="0.9"/>
<ellipse cx="646" cy="647" rx="5.5" ry="17.5" transform="rotate(-8 646 647)" fill="none" stroke="#f4f470" stroke-width="0.9"/>
<ellipse cx="512.0" cy="669.725" rx="15" ry="36" transform="rotate(-6 512.0 669.725)" fill="url(#brG)" stroke="#2a1408" stroke-width="1"/>
<path d="M491.0 636.6L508.8 634.125L515.8 705.325L498.3 707.4Z" fill="url(#brG)"/>
<path d="M490.9 636.3L508.5 633.725M498.3 707.7L515.8 705.725" stroke="#2a1408" stroke-width="1" fill="none"/>
<ellipse cx="494.5" cy="672" rx="15" ry="36" transform="rotate(-6 494.5 672)" fill="#a25c30" stroke="#2a1408" stroke-width="1"/>
<ellipse cx="495.3" cy="672" rx="11.700000000000001" ry="28.080000000000002" transform="rotate(-6 495.3 672)" fill="#7a4220" stroke="#3a1c0c" stroke-width="0.8"/>
<ellipse cx="495.7" cy="672" rx="9.3" ry="23.04" transform="rotate(-6 495.7 672)" fill="#c07e4a" stroke="#3a1c0c" stroke-width="0.8"/>
<ellipse cx="496.3" cy="672" rx="6.3" ry="16.2" transform="rotate(-6 496.3 672)" fill="#8a4c26" stroke="#3a1c0c" stroke-width="0.8"/>
<ellipse cx="497.5" cy="672" rx="3.9000000000000004" ry="14.4" transform="rotate(-6 497.5 672)" fill="#b87442"/>
<path d="M569.500 544c0-4 2-5 5-5.500l20-2.300c3-.3 5 1 5 4.500v6.500c0 3-2 4.500-5 5l-20 2.300c-3 .3-5-1-5-4z" fill="#1c6a7c" stroke="#0a3038" stroke-width=".9"/>
<path d="M569.500 543c0-3 2-4.500 5-5l20-2.300c3-.3 5 1 5 3.800s-2 4.300-5 4.800l-20 2.300c-3 .3-5-1-5-3.600z" fill="#2c8fa2" stroke="#0a3038" stroke-width=".8"/>
<path d="M684.500 527.500c0-4.500 3-6.500 7-7l32.500-2.800c4-.3 7 1.300 7 5.500v7c0 4-3 6-7 6.500l-32.500 2.800c-4 .3-7-1.300-7-5z" fill="#2e5e12" stroke="#122c06" stroke-width=".9"/>
<path d="M684.500 526.500c0-4 3-6 7-6.500l32.500-2.800c4-.3 7 1.300 7 4.800s-3 5.600-7 6.100l-32.500 2.800c-4 .3-7-1.300-7-4.400z" fill="#3c7c1a" stroke="#122c06" stroke-width=".8"/>
<ellipse cx="1273.5" cy="533.095" rx="14.5" ry="33.5" transform="rotate(-6 1273.5 533.095)" fill="url(#brG)" stroke="#2a1408" stroke-width="1"/>
<path d="M1251.5 502.6L1270.3 499.995L1277.3 566.195L1258.8 568.4Z" fill="url(#brG)"/>
<path d="M1251.4 502.3L1270.0 499.595M1258.8 568.7L1277.3 566.595" stroke="#2a1408" stroke-width="1" fill="none"/>
<ellipse cx="1255" cy="535.5" rx="14.5" ry="33.5" transform="rotate(-6 1255 535.5)" fill="#a25c30" stroke="#2a1408" stroke-width="1"/>
<ellipse cx="1255.8" cy="535.5" rx="11.31" ry="26.130000000000003" transform="rotate(-6 1255.8 535.5)" fill="#7a4220" stroke="#3a1c0c" stroke-width="0.8"/>
<ellipse cx="1256.2" cy="535.5" rx="8.99" ry="21.44" transform="rotate(-6 1256.2 535.5)" fill="#c07e4a" stroke="#3a1c0c" stroke-width="0.8"/>
<ellipse cx="1256.8" cy="535.5" rx="6.09" ry="15.075000000000001" transform="rotate(-6 1256.8 535.5)" fill="#8a4c26" stroke="#3a1c0c" stroke-width="0.8"/>
<ellipse cx="1258" cy="535.5" rx="3.77" ry="13.4" transform="rotate(-6 1258 535.5)" fill="#b87442"/>
<ellipse cx="1090" cy="268" rx="20" ry="59" transform="rotate(-7 1090 268)" fill="#653068" stroke="#2a0c30" stroke-width="1"/>
<path d="M1043.1 214.0L1082.8 209.4L1097.2 326.6L1057.9 334.0Z" fill="#653068"/>
<path d="M1045.2 213.5Q1065.8 208.0 1086.4 209.4" stroke="#3c1842" stroke-width="2.600" fill="none"/>
<path d="M1045.2 216.1Q1065.8 210.6 1086.4 212.0" stroke="#94589a" stroke-width="1.500" fill="none"/>
<path d="M1049.0 215.3Q1069.7 210.0 1090.3 211.8" stroke="#3c1842" stroke-width="2.600" fill="none"/>
<path d="M1049.0 217.9Q1069.7 212.6 1090.3 214.4" stroke="#94589a" stroke-width="1.500" fill="none"/>
<path d="M1052.9 218.9Q1073.6 214.0 1094.3 216.1" stroke="#3c1842" stroke-width="2.600" fill="none"/>
<path d="M1052.9 221.5Q1073.6 216.6 1094.3 218.7" stroke="#94589a" stroke-width="1.500" fill="none"/>
<path d="M1056.7 224.5Q1077.4 219.8 1098.1 222.1" stroke="#3c1842" stroke-width="2.600" fill="none"/>
<path d="M1056.7 227.1Q1077.4 222.4 1098.1 224.7" stroke="#94589a" stroke-width="1.500" fill="none"/>
<path d="M1060.3 231.7Q1080.9 227.2 1101.6 229.7" stroke="#3c1842" stroke-width="2.600" fill="none"/>
<path d="M1060.3 234.3Q1080.9 229.8 1101.6 232.3" stroke="#94589a" stroke-width="1.500" fill="none"/>
<path d="M1063.5 240.3Q1084.1 235.9 1104.7 238.5" stroke="#3c1842" stroke-width="2.600" fill="none"/>
<path d="M1063.5 242.9Q1084.1 238.5 1104.7 241.1" stroke="#94589a" stroke-width="1.500" fill="none"/>
<path d="M1066.4 250.0Q1086.9 245.7 1107.3 248.3" stroke="#3c1842" stroke-width="2.600" fill="none"/>
<path d="M1066.4 252.6Q1086.9 248.3 1107.3 250.9" stroke="#94589a" stroke-width="1.500" fill="none"/>
<path d="M1068.7 260.6Q1089.0 256.2 1109.4 258.8" stroke="#3c1842" stroke-width="2.600" fill="none"/>
<path d="M1068.7 263.2Q1089.0 258.8 1109.4 261.4" stroke="#94589a" stroke-width="1.500" fill="none"/>
<path d="M1070.4 271.6Q1090.6 267.1 1110.8 269.6" stroke="#3c1842" stroke-width="2.600" fill="none"/>
<path d="M1070.4 274.2Q1090.6 269.7 1110.8 272.2" stroke="#94589a" stroke-width="1.500" fill="none"/>
<path d="M1071.4 282.6Q1091.4 278.0 1111.5 280.4" stroke="#3c1842" stroke-width="2.600" fill="none"/>
<path d="M1071.4 285.2Q1091.4 280.6 1111.5 283.0" stroke="#94589a" stroke-width="1.500" fill="none"/>
<path d="M1071.7 293.4Q1091.6 288.6 1111.5 290.7" stroke="#3c1842" stroke-width="2.600" fill="none"/>
<path d="M1071.7 296.0Q1091.6 291.2 1111.5 293.3" stroke="#94589a" stroke-width="1.500" fill="none"/>
<path d="M1071.3 303.6Q1091.0 298.4 1110.8 300.3" stroke="#3c1842" stroke-width="2.600" fill="none"/>
<path d="M1071.3 306.2Q1091.0 301.0 1110.8 302.9" stroke="#94589a" stroke-width="1.500" fill="none"/>
<path d="M1070.2 312.7Q1089.8 307.2 1109.4 308.7" stroke="#3c1842" stroke-width="2.600" fill="none"/>
<path d="M1070.2 315.3Q1089.8 309.8 1109.4 311.3" stroke="#94589a" stroke-width="1.500" fill="none"/>
<path d="M1068.5 320.6Q1087.9 314.7 1107.3 315.9" stroke="#3c1842" stroke-width="2.600" fill="none"/>
<path d="M1068.5 323.2Q1087.9 317.3 1107.3 318.5" stroke="#94589a" stroke-width="1.500" fill="none"/>
<path d="M1066.1 326.8Q1085.4 320.6 1104.6 321.4" stroke="#3c1842" stroke-width="2.600" fill="none"/>
<path d="M1066.1 329.4Q1085.4 323.2 1104.6 324.0" stroke="#94589a" stroke-width="1.500" fill="none"/>
<path d="M1063.3 331.4Q1082.4 324.7 1101.5 325.1" stroke="#3c1842" stroke-width="2.600" fill="none"/>
<path d="M1063.3 334.0Q1082.4 327.3 1101.5 327.7" stroke="#94589a" stroke-width="1.500" fill="none"/>
<path d="M1060.0 334.0Q1079.0 326.9 1098.0 326.9" stroke="#3c1842" stroke-width="2.600" fill="none"/>
<path d="M1060.0 336.6Q1079.0 329.5 1098.0 329.5" stroke="#94589a" stroke-width="1.500" fill="none"/>
<path d="M1076.6 250.5L1104.3 251.3" stroke="#e8b8e8" stroke-width="1.500" fill="none"/>
<path d="M1078.8 261.0L1106.4 261.8" stroke="#e8b8e8" stroke-width="1.500" fill="none"/>
<path d="M1080.5 271.9L1107.8 272.6" stroke="#e8b8e8" stroke-width="1.500" fill="none"/>
<path d="M1081.4 282.9L1108.5 283.4" stroke="#e8b8e8" stroke-width="1.500" fill="none"/>
<path d="M1081.6 293.6L1108.5 293.7" stroke="#e8b8e8" stroke-width="1.500" fill="none"/>
<ellipse cx="1090" cy="268" rx="20" ry="59" transform="rotate(-7 1090 268)" fill="none" stroke="#2a0c30" stroke-width="1.2" stroke-dasharray="4 2.500"/>
<ellipse cx="1050.5" cy="274" rx="19.5" ry="60.5" transform="rotate(-7 1050.5 274)" fill="#8a4688" stroke="#3a1040" stroke-width="1.6" stroke-dasharray="5.500 1.600"/>
<ellipse cx="1050.5" cy="274" rx="18.0" ry="58.0" transform="rotate(-7 1050.5 274)" fill="#8e488c"/>
<ellipse cx="1052.5" cy="275.5" rx="8.8" ry="24" transform="rotate(-7 1052.5 275.5)" fill="url(#pHole)" stroke="#3a1040" stroke-width="1"/>
<ellipse cx="1054.3" cy="275.8" rx="6.8" ry="22" transform="rotate(-7 1054.3 275.8)" fill="#7a3a7c"/>
<ellipse cx="1052.6" cy="275.6" rx="7.2" ry="23" transform="rotate(-7 1052.6 275.6)" fill="none" stroke="#d8a8d8" stroke-width="0.9"/>
<ellipse cx="1133.2" cy="262.47" rx="14" ry="33.5" transform="rotate(-8 1133.2 262.47)" fill="url(#tealSide)" stroke="#0c3a40" stroke-width="1"/>
<ellipse cx="1131" cy="262.8" rx="14" ry="33.5" transform="rotate(-8 1131 262.8)" fill="#3aa4ae" stroke="#0c3a40" stroke-width="1"/>
<ellipse cx="1131.5" cy="262.8" rx="7.2" ry="20.5" transform="rotate(-8 1131.5 262.8)" fill="#1e7a84" stroke="#0c3a40" stroke-width="1"/>
<ellipse cx="1134.2" cy="262.4" rx="5.8" ry="19.5" transform="rotate(-8 1134.2 262.4)" fill="#aecdd1"/>
<ellipse cx="1181" cy="253.5" rx="26" ry="60" transform="rotate(-9 1181 253.5)" fill="#a86e66" stroke="#1e0c0c" stroke-width="1.2"/>
<defs><radialGradient id="bvH" cx=".85" cy=".5" r=".35"><stop offset="0" stop-color="#fff" stop-opacity=".95"/><stop offset="1" stop-color="#fff" stop-opacity="0"/></radialGradient></defs>
<ellipse cx="1181" cy="253.5" rx="26" ry="60" transform="rotate(-9 1181 253.5)" fill="url(#bvH)"/>
<path d="M1174.3 203.1L1177.2 194.2L1179.4 195.1Z" fill="#2a1210" stroke="#2a1210" stroke-width="1"/>
<path d="M1177.6 204.8L1181.4 196.1L1183.6 197.7Z" fill="#2a1210" stroke="#2a1210" stroke-width="1"/>
<path d="M1180.9 207.6L1185.6 199.4L1187.8 201.6Z" fill="#2a1210" stroke="#2a1210" stroke-width="1"/>
<path d="M1184.2 211.5L1189.7 203.9L1191.8 206.8Z" fill="#2a1210" stroke="#2a1210" stroke-width="1"/>
<path d="M1187.2 216.3L1193.6 209.6L1195.6 213.0Z" fill="#2a1210" stroke="#2a1210" stroke-width="1"/>
<path d="M1190.1 222.0L1197.2 216.2L1199.0 220.1Z" fill="#2a1210" stroke="#2a1210" stroke-width="1"/>
<path d="M1192.7 228.5L1200.4 223.8L1202.0 228.0Z" fill="#2a1210" stroke="#2a1210" stroke-width="1"/>
<path d="M1195.0 235.5L1203.2 232.0L1204.5 236.5Z" fill="#2a1210" stroke="#2a1210" stroke-width="1"/>
<path d="M1196.9 242.9L1205.5 240.7L1206.5 245.4Z" fill="#2a1210" stroke="#2a1210" stroke-width="1"/>
<path d="M1198.3 250.6L1207.2 249.7L1207.9 254.5Z" fill="#2a1210" stroke="#2a1210" stroke-width="1"/>
<path d="M1199.3 258.3L1208.3 258.8L1208.7 263.5Z" fill="#2a1210" stroke="#2a1210" stroke-width="1"/>
<path d="M1199.7 265.9L1208.8 267.7L1208.8 272.3Z" fill="#2a1210" stroke="#2a1210" stroke-width="1"/>
<path d="M1199.7 273.2L1208.7 276.4L1208.3 280.7Z" fill="#2a1210" stroke="#2a1210" stroke-width="1"/>
<path d="M1199.2 280.1L1207.9 284.5L1207.2 288.5Z" fill="#2a1210" stroke="#2a1210" stroke-width="1"/>
<path d="M1198.2 286.4L1206.4 291.9L1205.5 295.4Z" fill="#2a1210" stroke="#2a1210" stroke-width="1"/>
<path d="M1196.7 291.9L1204.4 298.4L1203.2 301.4Z" fill="#2a1210" stroke="#2a1210" stroke-width="1"/>
<path d="M1194.8 296.5L1201.9 303.9L1200.4 306.3Z" fill="#2a1210" stroke="#2a1210" stroke-width="1"/>
<path d="M1192.5 300.2L1198.9 308.2L1197.1 310.0Z" fill="#2a1210" stroke="#2a1210" stroke-width="1"/>
<path d="M1189.9 302.7L1195.5 311.3L1193.5 312.3Z" fill="#2a1210" stroke="#2a1210" stroke-width="1"/>
<ellipse cx="1175.5" cy="253.0" rx="22" ry="54.5" transform="rotate(-9 1175.5 253.0)" fill="#a87068" stroke="#2a1210" stroke-width="1.1"/>
<ellipse cx="1174" cy="253.0" rx="19.5" ry="50" transform="rotate(-9 1174 253.0)" fill="#ae766e" stroke="#6a3c38" stroke-width="0.8"/>
<ellipse cx="1172" cy="257.5" rx="16" ry="35.5" transform="rotate(-9 1172 257.5)" fill="#80504a" stroke="#2a1210" stroke-width="1"/>
<ellipse cx="1167" cy="258" rx="14.5" ry="34" transform="rotate(-9 1167 258)" fill="url(#brnHub)" stroke="#2a1210" stroke-width="1"/>
<ellipse cx="1166" cy="258.2" rx="11.5" ry="29" transform="rotate(-9 1166 258.2)" fill="#b88078" stroke="#5a302c" stroke-width="0.8"/>
<ellipse cx="1166.5" cy="258.5" rx="8.2" ry="22" transform="rotate(-9 1166.5 258.5)" fill="#6e403c" stroke="#2a1210" stroke-width="0.9"/>
<ellipse cx="1164.7" cy="258.5" rx="5.2" ry="19.5" transform="rotate(-9 1164.7 258.5)" fill="#a87068"/>
<ellipse cx="1223.8" cy="239.08" rx="15" ry="35.5" transform="rotate(-9 1223.8 239.08)" fill="url(#tealSide)" stroke="#0c3a40" stroke-width="1"/>
<ellipse cx="1221" cy="239.5" rx="15" ry="35.5" transform="rotate(-9 1221 239.5)" fill="#3aa4ae" stroke="#0c3a40" stroke-width="1"/>
<ellipse cx="1221.5" cy="239.5" rx="7.2" ry="20.5" transform="rotate(-9 1221.5 239.5)" fill="#1e7a84" stroke="#0c3a40" stroke-width="1"/>
<ellipse cx="1224" cy="239" rx="5.6" ry="19" transform="rotate(-9 1224 239)" fill="#abcbcf"/>
<ellipse cx="1269" cy="236" rx="15" ry="39" transform="rotate(-8 1269 236)" fill="#1f7a84" stroke="#0c3a40" stroke-width="1"/>
<path d="M1258 197.500L1267 196.500L1275.500 274L1266 275.500Z" fill="#1f7a84"/>
<ellipse cx="1266" cy="236" rx="15" ry="39" transform="rotate(-8 1266 236)" fill="url(#tealSide)" stroke="#0c3a40" stroke-width="0.8"/>
<ellipse cx="1261.5" cy="236.5" rx="15" ry="39" transform="rotate(-8 1261.5 236.5)" fill="#38a2ac" stroke="#0c3a40" stroke-width="1"/>
<ellipse cx="1261" cy="237" rx="12.5" ry="33" transform="rotate(-8 1261 237)" fill="none" stroke="#14606a" stroke-width="0.9"/>
<ellipse cx="1259" cy="237.5" rx="8" ry="20" transform="rotate(-8 1259 237.5)" fill="#1f7c86" stroke="#0c3a40" stroke-width="1"/>
<ellipse cx="1261" cy="237.5" rx="5.6" ry="18" transform="rotate(-8 1261 237.5)" fill="#2f939d"/>
<path d="M1267 225.500l16-3.500 .8 3.800-16 3.500z" fill="#155e68" stroke="#0c3a40" stroke-width=".8"/>
<path d="M1069.5 270.5L1129.5 263.5" stroke="#00f000" stroke-width="1.100"/>
<path d="M1070.5 266.0L1129.5 263.5" stroke="#40ff40" stroke-width=".9" opacity=".85"/>
<rect x="1127.5" y="261.5" width="4" height="4" fill="#00f000"/>
<path d="M1069.5 270.5L1174.5 255.8" stroke="#00f000" stroke-width="1.100"/>
<path d="M1070.5 266.0L1174.5 255.8" stroke="#40ff40" stroke-width=".9" opacity=".85"/>
<rect x="1172.5" y="253.8" width="4" height="4" fill="#00f000"/>
<path d="M1069.5 270.5L1220 240" stroke="#00f000" stroke-width="1.100"/>
<path d="M1070.5 266.0L1220 240" stroke="#40ff40" stroke-width=".9" opacity=".85"/>
<rect x="1218" y="238" width="4" height="4" fill="#00f000"/>
<path d="M1069.5 270.5L1263.5 236.8" stroke="#00f000" stroke-width="1.100"/>
<path d="M1070.5 266.0L1263.5 236.8" stroke="#40ff40" stroke-width=".9" opacity=".85"/>
<rect x="1261.5" y="234.8" width="4" height="4" fill="#00f000"/>
<path d="M1068 268L1061 572" stroke="#00f000" stroke-width="2.400"/><path d="M1071 272L1064.500 572" stroke="#00f000" stroke-width="1.800"/>
<path d="M1065.500 266h7l1.500 5.500-3.500 4.500-5-1.500z" fill="#00f000"/>
<path d="M583.500 548L582.500 644" stroke="#00ee00" stroke-width="1"/><path d="M583.500 544l-3 6h6z" fill="#00ee00"/><rect x="579.500" y="642" width="5.500" height="5" fill="#00ee00"/>
<path d="M706.800 532L706 592" stroke="#00ee00" stroke-width="1"/><path d="M706.800 528l-3 6h6z" fill="#00ee00"/>
<path d="M508 670.500L842 610" stroke="#00ee00" stroke-width="1.200"/><path d="M504 671.200l7-4.200 1 5.500z" fill="#00ee00"/><rect x="839" y="607" width="5.500" height="5.500" fill="#00ee00"/><rect x="640" y="643.500" width="6.500" height="5" fill="#00ee00"/>
<path d="M1104 562L1259 535" stroke="#00ee00" stroke-width="1"/><rect x="1101" y="559.500" width="5.500" height="5.500" fill="#00ee00"/><rect x="1256.500" y="533" width="4.500" height="4.500" fill="#00ee00"/>
<path d="M902 599L1062 571.500" stroke="#00ee00" stroke-width="1.100"/><path d="M899.500 599.500l6-3.500 1 5z" fill="#00ee00"/>
<rect x="958.0" y="586.5" width="5" height="5" fill="#00ee00"/>
<rect x="968.0" y="584.5" width="5" height="5" fill="#00ee00"/>
<rect x="979.5" y="582.5" width="5" height="5" fill="#00ee00"/>
<rect x="993.5" y="580.0" width="5" height="5" fill="#00ee00"/>
<rect x="1004.5" y="578.0" width="5" height="5" fill="#00ee00"/>
<rect x="1014.5" y="576.0" width="5" height="5" fill="#00ee00"/>
<path d="M1028 573.500l6 1.500 1 5.500-5 2-4-3z" fill="#00ee00"/>
<rect x="1057.500" y="566.500" width="8.500" height="8" rx="1" fill="#00ee00"/>
<path d="M695.5 636.5L697 594C722 590 741 606 743 627.500Z" fill="#c4c4cc" opacity=".75"/>
<path d="M695.5 636.5L743 627.500C745 644 734 656 717.500 659.500Z" fill="#b8b8c0" opacity=".6"/>
<path d="M695.5 636.5L760 625.500" stroke="#10b010" stroke-width="3.200"/><path d="M769 624l-11-3 1.500 8.500z" fill="#10b010"/>
<path d="M697 594C722 590 741 606 743 627.500" fill="none" stroke="#0808c8" stroke-width="3.600"/>
<path d="M743 627.500C745 644 734 656 717.500 659.500" fill="none" stroke="#c80808" stroke-width="3.400"/>
<path d="M697 594C708 610 716 640 714.500 659" fill="none" stroke="#10c010" stroke-width="3.600"/>
<path d="M695.5 636.5L716 661" stroke="#0808c8" stroke-width="3.400"/><path d="M723.500 669.500l-11-4.500 6.500-6z" fill="#0808c8"/>
<path d="M696.0 636.5L697 580" stroke="#d80808" stroke-width="3.600"/><path d="M697.200 570l-4 11h8z" fill="#d80808"/>
<circle cx="695.5" cy="636.5" r="4.200" fill="url(#ballW)"/>
<text x="692.500" y="568.500" font-family="Liberation Sans" font-size="15" fill="#e01818" textLength="9" lengthAdjust="spacingAndGlyphs">Z</text>
<text x="765" y="622" font-family="Liberation Sans" font-size="13" fill="#18c018" textLength="8" lengthAdjust="spacingAndGlyphs">Y</text>
<text x="722.500" y="675" font-family="Liberation Sans" font-size="13" fill="#1818d0" textLength="8" lengthAdjust="spacingAndGlyphs">X</text>
<path d="M380.5 716L352.8 720.9C354 705 366 692 382.2 689.6Z" fill="#c2c2c4"/>
<path d="M380.5 716L382.2 689.6C390 700 393 716 392.6 729.8Z" fill="#d4d4da"/>
<path d="M380.5 716L352.8 720.9C362 729 378 732 392.6 729.8Z" fill="#c8c8cc"/>
<path d="M352.8 720.9C354 705 366 692 382.2 689.6" fill="none" stroke="#30d040" stroke-width="1.300"/>
<path d="M382.2 689.6C390 700 393 716 392.6 729.8" fill="none" stroke="#1818c8" stroke-width="1.300"/>
<path d="M352.8 720.9C362 729 378 732 392.6 729.8" fill="none" stroke="#d83030" stroke-width="1.300"/>
<path d="M380.5 716L382.2 689.6" stroke="#c80808" stroke-width="5"/>
<path d="M380.5 716L352.8 720.9" stroke="#0808a8" stroke-width="5"/>
<path d="M380.5 716L392.6 729.8" stroke="#0c900c" stroke-width="5"/>
<circle cx="382.2" cy="689.6" r="5.500" fill="url(#ballR)"/><circle cx="352.8" cy="720.9" r="5.200" fill="url(#ballB)"/><circle cx="392.6" cy="729.8" r="5.400" fill="url(#ballG)"/>
<text x="379" y="681" font-family="Liberation Sans" font-size="15" fill="#d82020" textLength="8" lengthAdjust="spacingAndGlyphs">Z</text>
<text x="339" y="724" font-family="Liberation Sans" font-size="14" fill="#1818c8" textLength="8" lengthAdjust="spacingAndGlyphs">X</text>
<text x="396" y="734.500" font-family="Liberation Sans" font-size="14" fill="#18c018" textLength="6" lengthAdjust="spacingAndGlyphs">Y</text>
<path d="M361 752c1-3.500 3.500-6 6.500-7-2 2-3 4-3.500 7z" fill="#e8a060" opacity=".8"/>
<text x="351.500" y="769.500" font-family="Liberation Sans" font-size="21" font-weight="bold" font-style="italic" fill="#2c2c78" textLength="32" lengthAdjust="spacingAndGlyphs">KM</text>
<text x="385" y="769.500" font-family="Liberation Sans" font-size="13.500" font-weight="bold" font-style="italic" fill="#5a6a98" textLength="26" lengthAdjust="spacingAndGlyphs">Soft</text>
</svg></div>
<div class="abs" style="left:320px;top:777.500px;width:1120px;height:1.500px;background:#e6e6e6"></div>
<!--VP1-->
<div id="status" class="abs"><span class="abs" style="left:10px;top:6px;white-space:nowrap">请移动定位夹定义拆卸活动轨迹</span>
<svg class="abs" style="left:1424px;top:16px" width="14" height="13" viewBox="0 0 14 13"><g fill="#b4b4b4"><rect x="10" y="0" width="2.500" height="2.500"/><rect x="6" y="4" width="2.500" height="2.500"/><rect x="10" y="4" width="2.500" height="2.500"/><rect x="2" y="8" width="2.500" height="2.500"/><rect x="6" y="8" width="2.500" height="2.500"/><rect x="10" y="8" width="2.500" height="2.500"/></g></svg>
<div class="abs" style="left:0;top:28.500px;width:1440px;height:1.500px;background:#2a8ad8"></div></div>

</body>
</html>
